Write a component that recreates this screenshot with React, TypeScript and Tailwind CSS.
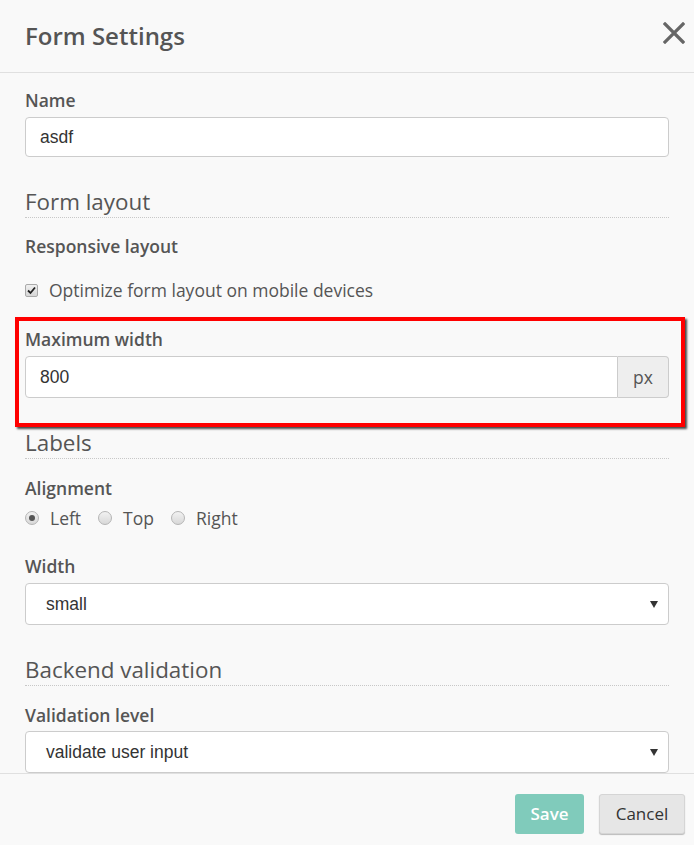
import React from "react";

const font = { fontFamily: '"Open Sans", "Liberation Sans", sans-serif' };
const arial = { fontFamily: '"Liberation Sans", Arial, sans-serif' };

function Heading({ children }: { children: React.ReactNode }) {
  return (
    <div className="border-b border-dotted border-[#c8c8c8] text-[22.4px] leading-[30px] text-[#555] h-[31px]">
      {children}
    </div>
  );
}

function Label({ children, className = "" }: { children: React.ReactNode; className?: string }) {
  return <div className={"text-[17.5px] leading-[22px] font-semibold text-[#555] " + className}>{children}</div>;
}

function Radio({ checked, label }: { checked?: boolean; label: string }) {
  return (
    <div className="flex items-center gap-[11px] mr-[17px]">
      <span className="w-[14px] h-[14px] rounded-full border border-[#b5b5b5] bg-gradient-to-b from-[#f2f2f2] to-[#d8d8d8] flex items-center justify-center">
        {checked && <span className="w-[6px] h-[6px] rounded-full bg-[#555]" />}
      </span>
      <span className="text-[17.5px] text-[#555]">{label}</span>
    </div>
  );
}

function Select({ value }: { value: string }) {
  return (
    <div className="h-[42px] bg-white border border-[#ccc] rounded-[4px] flex items-center justify-between pl-[20px] pr-[10px]">
      <span className="text-[17.5px] text-[#333]" style={arial}>
        {value}
      </span>
      <svg width="8" height="8" viewBox="0 0 8 8">
        <path d="M0 1 L8 1 L4 8 Z" fill="#333" />
      </svg>
    </div>
  );
}

export default function App() {
  return (
    <div className="w-[694px] h-[845px] bg-[#f9f9f9] flex flex-col overflow-hidden" style={font}>
      <div className="h-[73px] shrink-0 border-b border-[#e0e0e0] flex items-center justify-between pl-[25px] pr-[9px]">
        <div className="text-[24px] font-semibold text-[#555] leading-none">Form Settings</div>
        <svg width="22" height="22" viewBox="0 0 22 22" className="mt-[-6px]">
          <path d="M2 2 L20 20 M20 2 L2 20" stroke="#666" strokeWidth="3.2" strokeLinecap="square" />
        </svg>
      </div>

      <div className="flex-1 overflow-hidden px-[25px] pt-[16px] flex flex-col min-h-0">
        <Label>Name</Label>
        <div className="mt-[6px] h-[42px] bg-white border border-[#ccc] rounded-[4px] flex items-center pl-[14px]">
          <span className="text-[17.5px] text-[#333]" style={arial}>
            asdf
          </span>
        </div>

        <div className="mt-[30px]">
          <Heading>Form layout</Heading>
        </div>
        <Label className="mt-[17px]">Responsive layout</Label>
        <div className="mt-[22px] flex items-center gap-[11px] h-[22px]">
          <span className="w-[13px] h-[13px] rounded-[2px] border border-[#aaa] bg-gradient-to-b from-[#f0f0f0] to-[#d6d6d6] flex items-center justify-center">
            <svg width="9" height="9" viewBox="0 0 9 9">
              <path d="M1 4.5 L3.5 7 L8 1.5" stroke="#222" strokeWidth="1.8" fill="none" />
            </svg>
          </span>
          <span className="text-[17.5px] text-[#555]">Optimize form layout on mobile devices</span>
        </div>

        <div className="mt-[16px] ml-[-10px] mr-[-16px] border-4 border-[#ff0000] pl-[6px] pr-[12px] pt-[7px] pb-[25px] shadow-[2px_2px_2px_rgba(0,0,0,0.7)]">
          <Label>Maximum width</Label>
          <div className="mt-[6px] h-[42px] flex">
            <div className="flex-1 bg-white border border-[#ccc] rounded-l-[4px] flex items-center pl-[14px]">
              <span className="text-[17.5px] text-[#333]" style={arial}>
                800
              </span>
            </div>
            <div className="w-[51px] bg-[#eee] border border-l-0 border-[#ccc] rounded-r-[4px] flex items-center justify-center text-[17.5px] text-[#555]">
              px
            </div>
          </div>
        </div>

        <div className="mt-[1px]">
          <Heading>Labels</Heading>
        </div>
        <Label className="mt-[18px]">Alignment</Label>
        <div className="mt-[8px] flex items-center h-[22px]">
          <Radio checked label="Left" />
          <Radio label="Top" />
          <Radio label="Right" />
        </div>
        <Label className="mt-[26px]">Width</Label>
        <div className="mt-[6px]">
          <Select value="small" />
        </div>

        <div className="mt-[30px]">
          <Heading>Backend validation</Heading>
        </div>
        <Label className="mt-[18px]">Validation level</Label>
        <div className="mt-[5px]">
          <Select value="validate user input" />
        </div>
      </div>

      <div className="h-[72px] shrink-0 border-t border-[#e0e0e0] flex justify-end items-start pt-[20px] pr-[9px] gap-[15px]">
        <button className="h-[40px] w-[69px] rounded-[3px] bg-[#80cbbb] text-white text-[17px] font-semibold">Save</button>
        <button className="h-[40px] w-[86px] rounded-[3px] bg-[#e6e6e6] border border-[#d5d5d5] shadow-[0_1px_1px_rgba(0,0,0,0.25)] text-[#333] text-[17px]">
          Cancel
        </button>
      </div>
    </div>
  );
}
